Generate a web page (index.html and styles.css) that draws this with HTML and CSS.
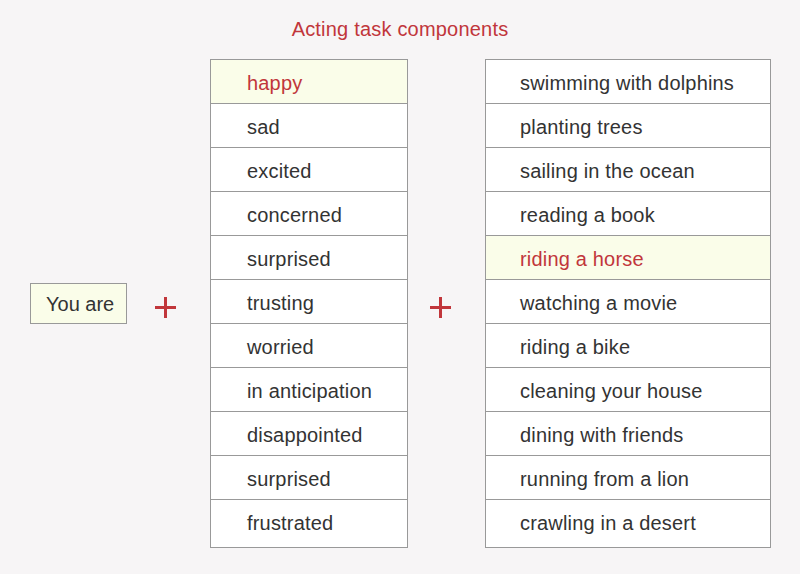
FILE: index.html
```html
<!DOCTYPE html>
<html>
<head>
<meta charset="utf-8">
<link rel="stylesheet" href="styles.css">
</head>
<body>
<div class="page">
  <h1 class="title">Acting task components</h1>
  <div class="row">
    <div class="you">You are</div>
    <div class="plus plus-a"></div>
    <ul class="list list-a">
      <li class="hl">happy</li>
      <li>sad</li>
      <li>excited</li>
      <li>concerned</li>
      <li>surprised</li>
      <li>trusting</li>
      <li>worried</li>
      <li>in anticipation</li>
      <li>disappointed</li>
      <li>surprised</li>
      <li>frustrated</li>
    </ul>
    <div class="plus plus-b"></div>
    <ul class="list list-b">
      <li>swimming with dolphins</li>
      <li>planting trees</li>
      <li>sailing in the ocean</li>
      <li>reading a book</li>
      <li class="hl">riding a horse</li>
      <li>watching a movie</li>
      <li>riding a bike</li>
      <li>cleaning your house</li>
      <li>dining with friends</li>
      <li>running from a lion</li>
      <li>crawling in a desert</li>
    </ul>
  </div>
</div>
</body>
</html>
```

FILE: styles.css
```css
html, body {
  margin: 0;
  padding: 0;
  background: #f7f5f6;
}
body {
  font-family: "Liberation Sans", Arial, sans-serif;
  color: #333333;
  width: 800px;
  height: 574px;
  overflow: hidden;
}
.page {
  padding-top: 18px;
}
.title {
  margin: 0;
  text-align: center;
  font-size: 20px;
  letter-spacing: 0.2px;
  font-weight: normal;
  color: #c1363b;
  line-height: 22px;
  height: 22px;
}
.row {
  display: flex;
  align-items: center;
  margin-top: 19px;
  padding-left: 30px;
}
.you {
  box-sizing: border-box;
  width: 97px;
  height: 41px;
  border: 1px solid #999999;
  background: #fafde9;
  font-size: 20px;
  line-height: 39px;
  padding-top: 1px;
  padding-left: 15px;
  color: #333333;
}
.plus {
  position: relative;
  width: 21px;
  height: 21px;
  margin-top: 8px;
}
.plus::before, .plus::after {
  content: "";
  position: absolute;
  background: #c1363b;
}
.plus::before {
  left: 0;
  top: 9px;
  width: 21px;
  height: 3px;
}
.plus::after {
  left: 9px;
  top: 0;
  width: 3px;
  height: 21px;
}
.plus-a {
  margin-left: 28px;
  margin-right: 34px;
}
.plus-b {
  margin-left: 22px;
  margin-right: 34px;
}
.list {
  list-style: none;
  margin: 0;
  padding: 0 0 3px 0;
  border: 1px solid #999999;
  background: #ffffff;
  box-sizing: border-box;
}
.list-a {
  width: 198px;
}
.list-b {
  width: 286px;
}
.list li {
  box-sizing: border-box;
  height: 44.1px;
  border-bottom: 1px solid #999999;
  font-size: 20px;
  letter-spacing: 0.18px;
  line-height: 43px;
  padding-top: 2px;
  padding-left: 36px;
  color: #333333;
}
.list-b li {
  padding-left: 34px;
}
.list li:first-child {
  height: 43.5px;
}
.list li:last-child {
  border-bottom: none;
}
.list li.hl {
  background: #fafde9;
  color: #c1363b;
}
```
